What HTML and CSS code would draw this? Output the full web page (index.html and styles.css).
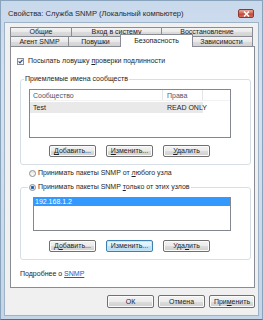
FILE: index.html
```html
<!DOCTYPE html>
<html lang="ru">
<head>
    <meta charset="UTF-8">
    <title>Свойства: Служба SNMP</title>
    <link rel="stylesheet" href="styles.css">
</head>
<body>
    <div class="window">
        <div class="titlebar">
            <span class="title">Свойства: Служба SNMP (Локальный компьютер)</span>
            <span class="close">
                <svg width="7" height="6" viewBox="0 0 7 6"><path d="M1 0.5 L6 5.5 M6 0.5 L1 5.5" stroke="#fff" stroke-width="1.5"/></svg>
            </span>
        </div>

        <div class="client">
            <div class="tabs">
                <div class="tab-row">
                    <div class="tab t-general">Общие</div>
                    <div class="tab t-logon">Вход в систему</div>
                    <div class="tab t-recovery">Восстановление</div>
                </div>
                <div class="tab-row front">
                    <div class="tab t-agent">Агент SNMP</div>
                    <div class="tab t-traps">Повушки</div>
                    <div class="tab t-security active">Безопасность</div>
                    <div class="tab t-deps">Зависимости</div>
                </div>
            </div>

            <div class="panel">
                <div class="check-row">
                    <span class="checkbox">
                        <svg width="5" height="5" viewBox="0 0 5 5"><path d="M0.6 2.4 L2 3.9 L4.5 0.8" fill="none" stroke="#24478a" stroke-width="1.2"/></svg>
                    </span>
                    <span>Посылать ловушку <u>п</u>роверки подлинности</span>
                </div>

                <fieldset class="group">
                    <legend>Приемлемые имена сообществ</legend>
                    <div class="group-body g1">
                        <div class="listview">
                            <div class="lv-header">
                                <span class="col c-name">Сообщество</span>
                                <span class="col c-rights">Права</span>
                            </div>
                            <div class="lv-row">
                                <span class="col c-name">Test</span>
                                <span class="col c-rights">READ ONLY</span>
                            </div>
                        </div>
                        <div class="btn-row">
                            <button class="btn"><u>Д</u>обавить...</button>
                            <button class="btn"><u>И</u>зменить...</button>
                            <button class="btn"><u>У</u>далить</button>
                        </div>
                    </div>
                </fieldset>

                <div class="radio-row">
                    <span class="radio"></span>
                    <span>Принимать пакеты SNMP от <u>л</u>юбого узла</span>
                </div>

                <fieldset class="group group2">
                    <legend>
                        <span class="radio checked"></span>
                        <span>Принимать пакеты SNMP <u>т</u>олько от этих узлов</span>
                    </legend>
                    <div class="group-body g2">
                        <div class="listbox">
                            <div class="lb-item">192.168.1.2</div>
                        </div>
                        <div class="btn-row">
                            <button class="btn">Д<u>о</u>бавить...</button>
                            <button class="btn focused">Изменить...</button>
                            <button class="btn">Уда<u>л</u>ить</button>
                        </div>
                    </div>
                </fieldset>

                <div class="info"><span>Подробнее о <a href="#">SNMP</a></span></div>
            </div>

            <div class="dialog-buttons">
                <button class="btn big">ОК</button>
                <button class="btn big">Отмена</button>
                <button class="btn big">При<u>м</u>енить</button>
            </div>
        </div>
    </div>
</body>
</html>
```

FILE: styles.css
```css
* {
    box-sizing: border-box;
}
body {
    margin: 0;
    font-family: "Liberation Sans", Arial, sans-serif;
    font-size: 7px;
    color: #1e1e1e;
}
u {
    text-decoration: underline;
}

/* window frame */
.window {
    width: 263px;
    height: 320px;
    display: flex;
    flex-direction: column;
    padding: 0 4px 4px 4px;
    background: linear-gradient(#c9d9ec, #d6e2ef 30%, #c4d5e8);
    border: 1px solid #8aa3bd;
    border-bottom-color: #2f7e9c;
}
.titlebar {
    height: 22px;
    display: flex;
    justify-content: space-between;
    padding-left: 3px;
}
.title {
    margin-top: 8px;
    line-height: 9px;
    font-size: 7.6px;
    color: #2b2b2b;
}
.close {
    width: 16px;
    height: 9px;
    margin-top: 8px;
    margin-right: 4px;
    display: flex;
    align-items: center;
    justify-content: center;
    border: 1px solid #8a3a34;
    border-radius: 2px;
    background: linear-gradient(#e8a898, #d36b5d 45%, #c2453a 55%, #d0705c);
}
.client {
    flex: 1;
    background: #f0f0f0;
    padding: 4px 3px 0 5px;
    box-shadow: 0 0 0 1px #9fb3c8;
}

/* tabs */
.tab-row {
    display: flex;
}
.tab {
    height: 9px;
    line-height: 8px;
    text-align: center;
    margin-left: -1px;
    border: 1px solid #898c95;
    border-bottom: none;
    background: linear-gradient(#f4f4f4, #e9e9e9 50%, #dcdcdc 50%, #d3d3d3);
    color: #222;
}
.tab:first-child {
    margin-left: 0;
}
.front .tab {
    height: 10px;
    line-height: 9px;
}
.t-general { width: 62px; }
.t-logon { width: 91px; }
.t-recovery { width: 92px; }
.t-agent { width: 59px; }
.t-traps { width: 55px; }
.t-security { width: 69px; }
.t-deps { width: 63px; }
.tab.active {
    position: relative;
    z-index: 1;
    width: 73px;
    height: 13px;
    margin: -2px -2px -1px -3px;
    line-height: 11px;
    background: #fff;
}

.panel {
    height: 242px;
    width: 245px;
    background: #fff;
    border: 1px solid #898c95;
    padding: 10px 0 0 9px;
    display: flex;
    flex-direction: column;
}
.check-row,
.radio-row,
.info {
    height: 8px;
    line-height: 8px;
    display: flex;
    align-items: center;
    white-space: nowrap;
}
.check-row {
    margin-left: -3px;
}
.checkbox {
    width: 7px;
    height: 7px;
    margin-right: 4px;
    border: 1px solid #8e8f8f;
    background: linear-gradient(#f0f0f0, #fff);
    display: flex;
    align-items: center;
    justify-content: center;
}

/* group boxes */
.group {
    margin: 10px 0 0 0;
    padding: 0;
    width: 231px;
    border: 1px solid #d5dfe5;
    border-radius: 3px;
}
.group legend {
    margin-left: 3px;
    padding: 0 1px;
    line-height: 8px;
    height: 8px;
    white-space: nowrap;
}
.group-body.g1 {
    padding: 6px 0 7px 8px;
}
.group2 {
    margin-top: 6px;
}
.group2 legend {
    margin-left: 7px;
    display: flex;
    align-items: center;
}
.group-body.g2 {
    padding: 6px 0 7px 12px;
}

.listview {
    width: 202px;
    height: 49px;
    border: 1px solid #828790;
    background: #fff;
}
.lv-header,
.lv-row {
    display: flex;
    height: 11px;
    line-height: 11px;
    white-space: nowrap;
}
.lv-header {
    color: #4c566a;
    border-bottom: 1px solid #f2f2f2;
}
.lv-header .col {
    border-right: 1px solid #e3e5e8;
}
.lv-row {
    margin-top: 1px;
    width: 173px;
    background: #e9e9e9;
}
.c-name {
    width: 133px;
    padding-left: 3px;
}
.c-rights {
    width: 40px;
    padding-left: 4px;
}

.radio-row {
    margin: 4px 0 0 9px;
}
.radio {
    width: 7px;
    height: 7px;
    margin-right: 2px;
    border: 1px solid #8e8f8f;
    border-radius: 50%;
    background: linear-gradient(#e4e4e4, #fff);
    display: inline-block;
}
.radio.checked {
    background: radial-gradient(circle, #1d4f9c 0, #3b76c4 1.4px, #dfe8f2 2px, #f4f4f4 3px);
}

.listbox {
    width: 198px;
    height: 34px;
    border: 1px solid #828790;
    background: #fff;
}
.lb-item {
    height: 8px;
    line-height: 8px;
    padding-left: 1px;
    background: #3399ff;
    color: #fff;
}

/* buttons */
.btn-row {
    display: flex;
    gap: 10px;
    padding-left: 20px;
    margin-top: 7px;
}
.g2 .btn-row {
    padding-left: 16px;
    margin-top: 9px;
}
.btn {
    width: 47px;
    height: 12px;
    padding: 0;
    font-family: inherit;
    font-size: 7px;
    line-height: 10px;
    color: #1e1e1e;
    border: 1px solid #707070;
    border-radius: 2px;
    background: linear-gradient(#f3f3f3, #ebebeb 50%, #dddddd 50%, #cfcfcf);
    box-shadow: inset 0 0 0 1px #fbfbfb;
}
.btn.focused {
    border-color: #3c7fb1;
    background: linear-gradient(#edf6fc, #dceffa 50%, #c4e4f6 50%, #b5daf1);
    box-shadow: inset 0 0 0 1px #c6e6f8;
}

.info {
    margin-top: 10px;
}
.info a {
    color: #0066cc;
}

.dialog-buttons {
    display: flex;
    justify-content: flex-end;
    gap: 4px;
    margin-top: 7px;
}
.btn.big {
    height: 13px;
    line-height: 11px;
}
.btn.big:last-child {
    width: 46px;
}
```
